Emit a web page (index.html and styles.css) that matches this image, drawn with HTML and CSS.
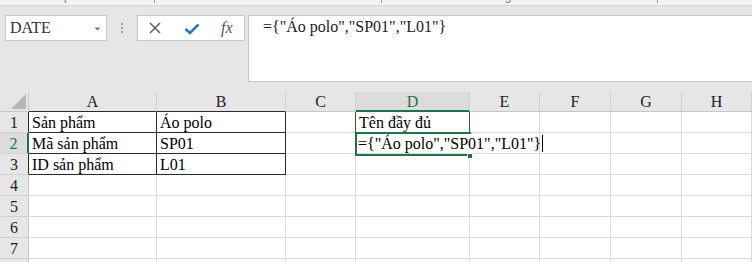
FILE: index.html
```html
<!DOCTYPE html>
<html>
<head>
<meta charset="utf-8">
<link rel="stylesheet" href="styles.css">
</head>
<body>
<div class="ribbon">
  <span class="rl rl-clip">Clipboard</span><span class="launch l1"></span>
  <span class="rl rl-font">Font</span><span class="launch l2"></span>
  <span class="rl rl-align">Alignment</span><span class="launch l3"></span>
  <span class="rl rl-num">Number</span>
</div>
<div class="fbar">
  <div class="namebox">
    <span class="nb-text">DATE</span>
    <svg class="nb-arrow" width="7" height="4" viewBox="0 0 7 4"><path d="M0.5 0.5 L6.5 0.5 L3.5 3.5 Z" fill="#777"/></svg>
  </div>
  <div class="dots"><i></i><i></i><i></i></div>
  <div class="fxbox">
    <svg class="ico-x" width="12" height="12" viewBox="0 0 12 12"><path d="M1 1 L11 11 M11 1 L1 11" stroke="#555" stroke-width="1.4" fill="none"/></svg>
    <svg class="ico-ok" width="16" height="12" viewBox="0 0 16 12"><path d="M1.5 6 L6 10 L14.5 1.5" stroke="#2b78c0" stroke-width="2.6" fill="none" stroke-linejoin="miter"/></svg>
    <span class="ico-fx">fx</span>
  </div>
  <div class="formula">={"Áo polo","SP01","L01"}</div>
</div>
<div class="grid">
  <div class="corner"><div class="tri"></div></div>
  <div class="ch dk">A</div>
  <div class="ch dk">B</div>
  <div class="ch">C</div>
  <div class="ch sel">D</div>
  <div class="ch">E</div>
  <div class="ch">F</div>
  <div class="ch">G</div>
  <div class="ch">H</div>

  <div class="rh dk">1</div>
  <div class="c bd">Sản phẩm</div>
  <div class="c bd">Áo polo</div>
  <div class="c gl">&nbsp;</div>
  <div class="c gb">Tên đầy đủ</div>
  <div class="c"></div><div class="c"></div><div class="c"></div><div class="c"></div>

  <div class="rh sel">2</div>
  <div class="c bd">Mã sản phẩm</div>
  <div class="c bd">SP01</div>
  <div class="c gl"></div>
  <div class="c active"><span class="ov">={"Áo polo","SP01","L01"}<span class="caret"></span></span><span class="frame"></span><span class="handle"></span></div>
  <div class="c"></div><div class="c"></div><div class="c"></div><div class="c"></div>

  <div class="rh dk">3</div>
  <div class="c bd">ID sản phẩm</div>
  <div class="c bd">L01</div>
  <div class="c"></div><div class="c"></div><div class="c"></div><div class="c"></div><div class="c"></div><div class="c"></div>

  <div class="rh">4</div>
  <div class="c"></div><div class="c"></div><div class="c"></div><div class="c"></div><div class="c"></div><div class="c"></div><div class="c"></div><div class="c"></div>
  <div class="rh">5</div>
  <div class="c"></div><div class="c"></div><div class="c"></div><div class="c"></div><div class="c"></div><div class="c"></div><div class="c"></div><div class="c"></div>
  <div class="rh">6</div>
  <div class="c"></div><div class="c"></div><div class="c"></div><div class="c"></div><div class="c"></div><div class="c"></div><div class="c"></div><div class="c"></div>
  <div class="rh">7</div>
  <div class="c"></div><div class="c"></div><div class="c"></div><div class="c"></div><div class="c"></div><div class="c"></div><div class="c"></div><div class="c"></div>
  <div class="rh">8</div>
  <div class="c"></div><div class="c"></div><div class="c"></div><div class="c"></div><div class="c"></div><div class="c"></div><div class="c"></div><div class="c"></div>
</div>
</body>
</html>
```

FILE: styles.css
```css
html, body {
  margin: 0;
  padding: 0;
  width: 752px;
  height: 262px;
  overflow: hidden;
  background: #ffffff;
  font-family: "Liberation Serif", "Times New Roman", serif;
}

.ribbon {
  height: 5px;
  background: #f3f3f3;
  border-bottom: 1px solid #d5d5d5;
  overflow: hidden;
  display: flex;
  align-items: flex-start;
  font-family: "Liberation Sans", Arial, sans-serif;
  font-size: 12px;
  color: #777;
}
.rl {
  line-height: 12px;
  margin-top: -10px;
  white-space: nowrap;
}
.launch {
  width: 5px;
  height: 2px;
  border-right: 1px solid #999;
  border-bottom: 1px solid #999;
}
.rl-clip { margin-left: 50px; }
.l1 { margin-left: 53px; }
.rl-font { margin-left: 99px; }
.l2 { margin-left: 103px; }
.rl-align { margin-left: 109px; }
.l3 { margin-left: 112px; }
.rl-num { margin-left: 53px; }

.fbar {
  height: 86px;
  background: #e6e6e6;
  box-sizing: border-box;
  padding-top: 9px;
  display: flex;
  align-items: flex-start;
}
.namebox {
  margin-left: 5px;
  width: 102px;
  height: 26px;
  box-sizing: border-box;
  background: #fff;
  border: 1px solid #c6c6c6;
  display: flex;
  align-items: center;
  justify-content: space-between;
  padding: 0 5px 0 4px;
}
.nb-text {
  font-size: 16px;
  line-height: 24px;
  color: #333;
}
.nb-arrow { display: block; margin-top: 1px; }

.dots {
  width: 30px;
  height: 26px;
  display: flex;
  flex-direction: column;
  align-items: center;
  justify-content: center;
  gap: 2px;
}
.dots i {
  display: block;
  width: 2px;
  height: 2px;
  background: #a4a4a4;
}

.fxbox {
  width: 108px;
  height: 26px;
  box-sizing: border-box;
  background: #fff;
  border: 1px solid #c6c6c6;
  display: flex;
  align-items: center;
  padding-left: 11px;
}
.ico-x { display: block; }
.ico-ok { display: block; margin-left: 23px; margin-top: 1px; }
.ico-fx {
  margin-left: 21px;
  font-style: italic;
  font-size: 16px;
  color: #555;
  line-height: 20px;
}

.formula {
  margin-left: 3px;
  flex: 1;
  height: 67px;
  margin-right: -4px;
  box-sizing: border-box;
  background: #fff;
  border: 1px solid #c6c6c6;
  padding: 2px 0 0 14px;
  font-size: 16px;
  color: #222;
  white-space: nowrap;
}

.grid {
  display: grid;
  grid-template-columns: 29px 128px 129px 70px 114px 70px 71px 71px 70px;
  grid-template-rows: 20px repeat(8, 21px);
  font-size: 16px;
}
.grid > div {
  box-sizing: border-box;
  border-right: 1px solid #dadada;
  border-bottom: 1px solid #dadada;
  white-space: nowrap;
}

.corner {
  background: #e6e6e6;
  display: flex;
  align-items: flex-end;
  justify-content: flex-end;
  padding: 0 2px 2px 0;
}
.grid > .corner { border-right-color: #c8c8c8; border-bottom-color: #c8c8c8; }
.tri {
  width: 15px;
  height: 15px;
  background: #b6b6b6;
  clip-path: polygon(100% 0, 100% 100%, 0 100%);
}

.ch {
  background: #e6e6e6;
  text-align: center;
  line-height: 20px;
  color: #222;
}
.grid > .ch { border-right-color: #cfcfcf; border-bottom-color: #c6c6c6; }
.grid > .ch.dk { border-bottom-color: #2a2a2a; }
.grid > .ch.sel {
  background: #dcdcdc;
  color: #217346;
  border-bottom: 2px solid #217346;
}

.rh {
  background: #e6e6e6;
  text-align: center;
  line-height: 20px;
  padding-top: 1px;
  color: #222;
}
.grid > .rh { border-right-color: #c6c6c6; border-bottom-color: #d2d2d2; }
.grid > .rh.dk { border-right-color: #2a2a2a; }
.grid > .rh.sel {
  background: #dcdcdc;
  color: #217346;
  border-right: 2px solid #217346;
}

.c {
  line-height: 20px;
  padding: 1px 0 0 3px;
  color: #000;
  background: #fff;
}
.grid > .c.bd { border-right-color: #2a2a2a; border-bottom-color: #2a2a2a; }
.grid > .c.gl { border-right-color: #2b5c40; }
.grid > .c.gb { border-right-color: #2b5c40; border-bottom-color: #2b5c40; }

.grid > .active {
  position: relative;
  padding-left: 2px;
  overflow: visible;
  border-right-color: transparent;
}
.ov {
  position: relative;
  z-index: 2;
}
.caret {
  display: inline-block;
  width: 1px;
  height: 17px;
  background: #000;
  margin-left: 1px;
  vertical-align: -3px;
}
.frame {
  position: absolute;
  left: -1px;
  top: -1px;
  width: 116px;
  height: 24px;
  box-sizing: border-box;
  border: 2px solid #217346;
  border-right: none;
  z-index: 1;
}
.handle {
  position: absolute;
  left: 111px;
  top: 20px;
  width: 4px;
  height: 4px;
  background: #217346;
  border: 1px solid #fff;
  z-index: 3;
}
```
